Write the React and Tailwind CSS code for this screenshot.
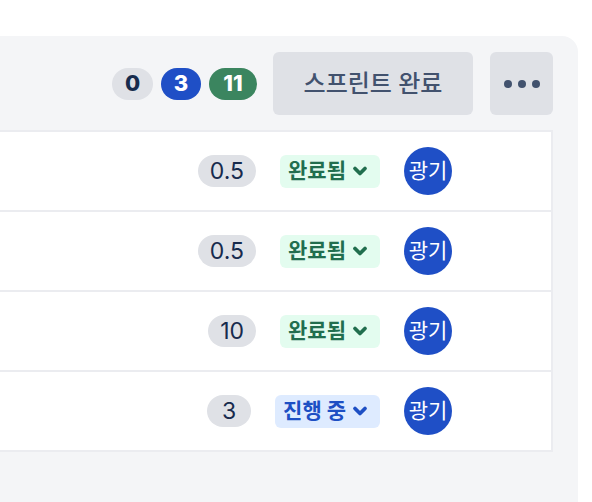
import { ChevronDown } from 'lucide-react';

const rows = [
  { estimate: '0.5', status: 'done' },
  { estimate: '0.5', status: 'done' },
  { estimate: '10', status: 'done' },
  { estimate: '3', status: 'progress' },
];

function StatusBadge({ status }) {
  const done = status === 'done';
  return (
    <span
      className={`flex h-[33px] items-center gap-1 rounded-md pl-2 pr-[10px] text-[21px] font-bold ${
        done ? 'bg-[#e3fcef] text-[#216e4e]' : 'bg-[#deebff] text-[#1d4fc4]'
      }`}
    >
      {done ? '완료됨' : '진행 중'}
      <ChevronDown className="h-[20px] w-[20px]" strokeWidth={4.5} />
    </span>
  );
}

export default function App() {
  return (
    <div
      className="min-h-[502px] bg-white pt-[36px] pr-[14px]"
      style={{ fontFamily: 'Inter, "Noto Sans CJK KR", sans-serif' }}
    >
      <div className="min-h-[466px] rounded-tr-2xl bg-[#f4f5f7] pt-4 pr-[25px] pb-12">
        <div className="flex items-center justify-end">
          <div className="flex items-center gap-2">
            <span className="flex h-8 min-w-[41px] items-center justify-center rounded-full bg-[#dfe1e6] px-3 text-[22px] font-extrabold text-[#172b4d]">0</span>
            <span className="flex h-8 min-w-[40px] items-center justify-center rounded-full bg-[#1f4fc6] px-3 text-[22px] font-extrabold text-white">3</span>
            <span className="flex h-8 min-w-[48px] items-center justify-center rounded-full bg-[#3b855f] px-3 text-[22px] font-extrabold text-white">11</span>
          </div>
          <button className="ml-4 flex h-[63px] w-[200px] items-center justify-center rounded-md bg-[#dfe1e6] text-[24px] font-medium text-[#42526e]">
            스프린트 완료
          </button>
          <button className="ml-[17px] flex h-[63px] w-[63px] items-center justify-center gap-[6px] rounded-md bg-[#dfe1e6]">
            <span className="h-[8px] w-[8px] rounded-full bg-[#42526e]" />
            <span className="h-[8px] w-[8px] rounded-full bg-[#42526e]" />
            <span className="h-[8px] w-[8px] rounded-full bg-[#42526e]" />
          </button>
        </div>

        <div className="mt-[15px] border-r-2 border-b-2 border-[#ebecf0] bg-white">
          {rows.map((row, i) => (
            <div
              key={i}
              className="flex h-[80px] items-center justify-end border-t-2 border-[#ebecf0] pr-[99px]"
            >
              <span className="flex h-8 min-w-[44px] items-center justify-center rounded-full bg-[#dfe1e6] px-[12px] text-[23px] text-[#172b4d]">
                {row.estimate}
              </span>
              <div className="ml-6">
                <StatusBadge status={row.status} />
              </div>
              <span className="ml-6 flex h-12 w-12 items-center justify-center rounded-full bg-[#1f4fc6] text-[21px] text-white">
                광기
              </span>
            </div>
          ))}
        </div>
      </div>
    </div>
  );
}
